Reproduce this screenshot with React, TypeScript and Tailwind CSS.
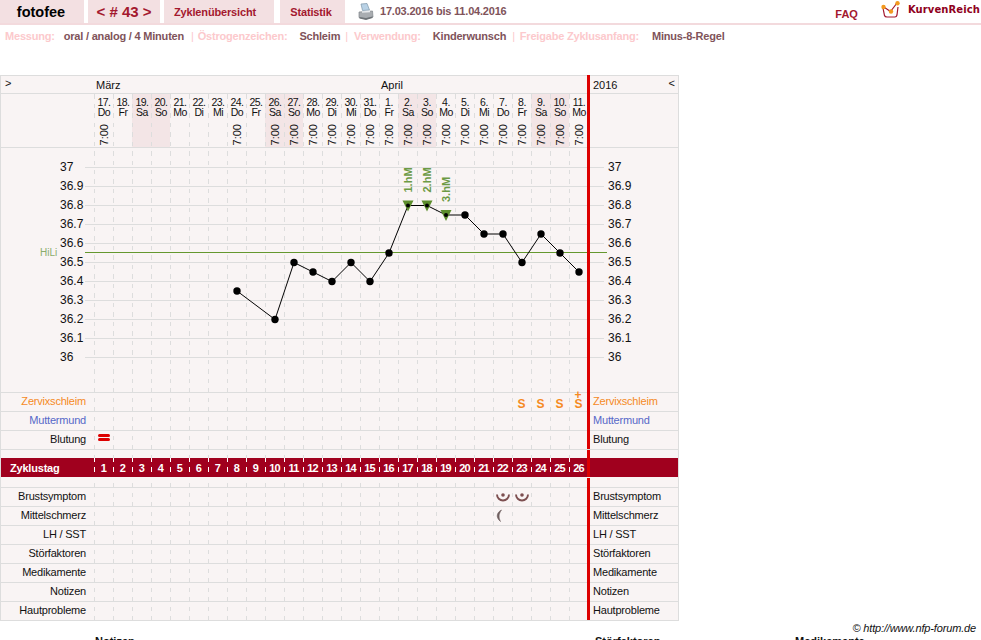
import type { ReactNode } from 'react'

const LINE = 'border-t border-[#dddddd]'
const DASH_GRAY = 'bg-[repeating-linear-gradient(to_bottom,#dddddd_0,#dddddd_4.5px,transparent_4.5px,transparent_9.5px)]'
const DASH_WHITE = 'bg-[repeating-linear-gradient(to_bottom,#ffffff_0,#ffffff_4.5px,transparent_4.5px,transparent_9.5px)]'

const days = [
  { d: '17.', w: 'Do', t: true },
  { d: '18.', w: 'Fr' },
  { d: '19.', w: 'Sa', we: true },
  { d: '20.', w: 'So', we: true },
  { d: '21.', w: 'Mo' },
  { d: '22.', w: 'Di' },
  { d: '23.', w: 'Mi' },
  { d: '24.', w: 'Do', t: true },
  { d: '25.', w: 'Fr' },
  { d: '26.', w: 'Sa', we: true, t: true },
  { d: '27.', w: 'So', we: true, t: true },
  { d: '28.', w: 'Mo', t: true },
  { d: '29.', w: 'Di', t: true },
  { d: '30.', w: 'Mi', t: true },
  { d: '31.', w: 'Do', t: true },
  { d: '1.', w: 'Fr', t: true },
  { d: '2.', w: 'Sa', we: true, t: true },
  { d: '3.', w: 'So', we: true, t: true },
  { d: '4.', w: 'Mo', t: true },
  { d: '5.', w: 'Di', t: true },
  { d: '6.', w: 'Mi', t: true },
  { d: '7.', w: 'Do', t: true },
  { d: '8.', w: 'Fr', t: true },
  { d: '9.', w: 'Sa', we: true, t: true },
  { d: '10.', w: 'So', we: true, t: true },
  { d: '11.', w: 'Mo', t: true },
]

const temps: [number, number][] = [
  [7, 36.35], [9, 36.2], [10, 36.5], [11, 36.45], [12, 36.4], [13, 36.5], [14, 36.4], [15, 36.55],
  [16, 36.8], [17, 36.8], [18, 36.75], [19, 36.75], [20, 36.65], [21, 36.65], [22, 36.5], [23, 36.65],
  [24, 36.55], [25, 36.45],
]

const axis = ['37', '36.9', '36.8', '36.7', '36.6', '36.5', '36.4', '36.3', '36.2', '36.1', '36']

const px = (i: number) => 94.5 + 19 * i + 9.5
const py = (t: number) => 167.5 + (37 - t) * 190

function Chart() {
  const pts = temps.map(([i, t]) => [px(i), py(t)])
  return (
    <svg width="677" height="244" viewBox="1 148 677 244" className="relative z-[5] block text-[12px]">
      {axis.map((label, i) => {
        const y = 167.5 + i * 19
        return (
          <g key={i}>
            <line x1="85" x2="604" y1={y} y2={y} stroke="#dddddd" />
            <text x="60" y={y + 3.5} fill="#111">{label}</text>
            <text x="608" y={y + 3.5} fill="#111">{label}</text>
          </g>
        )
      })}
      <line x1="85" x2="607" y1="252.5" y2="252.5" stroke="#65982f" />
      <text x="40" y="256" fontSize="10" fill="#8aad6a">HiLi</text>
      <polyline points={pts.map((p) => p.join(',')).join(' ')} fill="none" stroke="#000" />
      {[0, 1, 2].map((n) => {
        const [x, y] = pts[8 + n]
        return (
          <g key={n}>
            <polygon points={`${x - 5.5},${y - 5} ${x + 5.5},${y - 5} ${x},${y + 6}`} fill="#5c8d2c" />
            <text
              transform={`translate(${x + 4} ${y - 13}) rotate(-90)`}
              fontSize="11"
              fontWeight="700"
              fill="#6c9a44"
            >
              {n + 1}.hM
            </text>
          </g>
        )
      })}
      {pts.map(([x, y], i) =>
        i >= 8 && i <= 10 ? (
          <circle key={i} cx={x} cy={y} r="2" fill="#000" />
        ) : (
          <circle key={i} cx={x} cy={y} r="3.7" fill="#000" />
        ),
      )}
    </svg>
  )
}

function Breast() {
  return (
    <svg width="14" height="11" viewBox="0 0 14 11">
      <circle cx="7" cy="3" r="1.8" fill="#7d4f50" />
      <path d="M1 2.5 A6 6 0 0 0 13 2.5" fill="none" stroke="#7d4f50" strokeWidth="1.9" />
    </svg>
  )
}

function Midpain() {
  return (
    <svg width="8" height="14" viewBox="0 0 8 14" className="-ml-[7px]">
      <path d="M6.5 1 C1.5 3.5 0.5 8.5 5.5 12.5 C3.5 8.5 3.5 5 6.5 1 Z" fill="#6f5f60" stroke="#6f5f60" strokeWidth="0.6" />
    </svg>
  )
}

function Bleed() {
  return (
    <div className="mb-[6px] flex flex-col gap-px">
      <div className="h-[3px] w-[12px] rounded-full bg-[#dd0000]" />
      <div className="h-[3px] w-[12px] rounded-full bg-[#dd0000]" />
    </div>
  )
}

function Slime({ plus }: { plus?: boolean }) {
  return (
    <div className="relative pt-[4px] text-[12px] font-bold leading-[14px] text-[#f58a1f]">
      {plus && <span className="absolute -top-[4px] left-0 text-[12px] leading-[12px]">+</span>}
      S
    </div>
  )
}

function Row({
  label,
  color = 'text-[#111]',
  marks = {},
}: {
  label: string
  color?: string
  marks?: Record<number, ReactNode>
}) {
  return (
    <div className={`flex h-[19px] text-[11px] leading-[17px] tracking-[-0.2px] ${LINE}`}>
      <div className={`w-[93px] pr-[8px] text-right ${color}`}>{label}</div>
      <div className="grid w-[494px] grid-cols-[repeat(26,19px)]">
        {days.map((_, i) => (
          <div key={i} className="flex items-center justify-center">
            {marks[i]}
          </div>
        ))}
      </div>
      <div className={`pl-[5px] ${color}`}>{label}</div>
    </div>
  )
}

function Tab({ className, children }: { className: string; children: ReactNode }) {
  return <div className={`flex h-[23px] items-center justify-center bg-[#f3e0e2] ${className}`}>{children}</div>
}

export default function App() {
  return (
    <div className="h-[640px] overflow-hidden bg-white text-[11px] leading-[18px] text-[#111] [font-family:'Liberation_Sans',Arial,sans-serif]">
      {/* top bar */}
      <div className="flex h-[25px] items-start border-b-2 border-[#f3dadd]">
        <Tab className="w-[84px] pr-[2px] text-[14.5px] font-bold text-black">fotofee</Tab>
        <Tab className="ml-[4px] w-[72px] text-[15px] font-bold text-[#a3182e]">&lt; # 43 &gt;</Tab>
        <Tab className="ml-[4px] w-[110px] pr-[8px] text-[11px] font-bold tracking-[-0.15px] text-[#a3182e]">Zyklenübersicht</Tab>
        <Tab className="ml-[6px] w-[65px] pr-[3px] text-[11px] font-bold tracking-[-0.15px] text-[#a3182e]">Statistik</Tab>
        <svg width="16" height="18" viewBox="0 0 16 18" className="ml-[13px] mt-[3px]">
          <path d="M3 1 L9 0.5 L11.5 7 L4.5 7.5 Z" fill="#b9d2e6" stroke="#7d95a8" strokeWidth="0.7" />
          <path d="M1 9 L14.5 8 L15 14 L8 16 L1 14.5 Z" fill="#a9adb1" stroke="#7f8589" strokeWidth="0.7" />
          <path d="M1.5 14 L8 15 L14.5 13.5 L14.5 15 L8 17 L1.5 15.5 Z" fill="#6f7478" />
          <path d="M4 9 L12 8.4" stroke="#e8ebee" strokeWidth="1.5" />
        </svg>
        <div className="ml-[6px] h-[23px] text-[11px] font-bold leading-[23px] tracking-[-0.2px] text-[#80535a]">17.03.2016 bis 11.04.2016</div>
        <div className="ml-auto mt-[5px] text-[11px] font-bold text-[#a3182e]">FAQ</div>
        <svg width="20" height="18" viewBox="0 0 20 18" className="ml-[23px] mt-px">
          <path d="M2 7 L3.5 14.5 Q4 16 6 16 L14 16 Q15.5 16 16 14 L17 6" fill="none" stroke="#a3182e" strokeWidth="1.2" />
          <path d="M2 5.5 L9.5 10.5 L16 2" fill="none" stroke="#a3182e" strokeWidth="1.2" />
          <circle cx="2.5" cy="6" r="2.2" fill="#f39a1f" />
          <circle cx="10" cy="10.5" r="2.2" fill="#f39a1f" />
          <circle cx="16.5" cy="2.2" r="2.2" fill="#f39a1f" />
        </svg>
        <div className="ml-[7px] mr-px mt-px text-[10px] font-bold tracking-[0.1px] text-[#8f0020] [font-family:'DejaVu_Sans',sans-serif]">KurvenReich</div>
      </div>

      {/* settings line */}
      <div className="flex h-[50px] pl-[5px] pt-[2px] text-[11px] font-bold tracking-[-0.2px] text-[#80535a]">
        <span className="text-[#fcc9cc]">Messung:</span>
        <span className="ml-[9px]">oral / analog / 4 Minuten</span>
        <span className="ml-[7px] font-normal text-[#fcc9cc]">|</span>
        <span className="ml-[4px] text-[#fcc9cc]">Östrogenzeichen:</span>
        <span className="ml-[12px]">Schleim</span>
        <span className="ml-[5px] font-normal text-[#fcc9cc]">|</span>
        <span className="ml-[6px] text-[#fcc9cc]">Verwendung:</span>
        <span className="ml-[12px]">Kinderwunsch</span>
        <span className="ml-[6px] font-normal text-[#fcc9cc]">|</span>
        <span className="ml-[5px] text-[#fcc9cc]">Freigabe Zyklusanfang:</span>
        <span className="ml-[13px]">Minus-8-Regel</span>
      </div>

      {/* chart table */}
      <div className="relative w-[679px] border border-[#dddddd] bg-[#f9f4f4]">
        <div className="flex h-[17px]">
          <div className="w-[93px] pl-[4px] leading-[14px]">&gt;</div>
          <div className="w-[285px] pl-[2px]">März</div>
          <div className="w-[209px] pl-[2px]">April</div>
          <div className="flex flex-1 justify-between pl-[5px] pr-[3px]">
            <span>2016</span>
            <span className="leading-[14px]">&lt;</span>
          </div>
        </div>

        <div className={`flex h-[54px] ${LINE}`}>
          <div className="w-[93px]" />
          <div className="grid w-[494px] grid-cols-[repeat(26,19px)]">
            {days.map((day, i) => (
              <div
                key={i}
                className={`flex flex-col items-center pl-[1px] pt-[3px] text-[10.5px] leading-[10px] tracking-[-0.5px] ${day.we ? 'bg-[#f3e5e6]' : ''}`}
              >
                <span>{day.d}</span>
                <span>{day.w}</span>
                {day.t && (
                  <span className="mt-[7px] rotate-180 text-[11px] leading-[14px] tracking-normal [writing-mode:vertical-rl]">
                    7:00
                  </span>
                )}
              </div>
            ))}
          </div>
        </div>

        <div className={`h-[245px] ${LINE}`}>
          <Chart />
        </div>

        <Row
          label="Zervixschleim"
          color="text-[#f58a1f]"
          marks={{ 22: <Slime />, 23: <Slime />, 24: <Slime />, 25: <Slime plus /> }}
        />
        <Row label="Muttermund" color="text-[#5668c8]" />
        <Row label="Blutung" marks={{ 0: <Bleed /> }} />

        <div className={`relative z-30 h-[9px] ${LINE}`} />
        <div className="relative z-10 flex h-[19px] bg-[#a0001e] pt-px text-[11px] font-bold text-white">
          <div className="w-[93px] pl-[9px] tracking-[-0.2px]">Zyklustag</div>
          <div className="grid w-[494px] grid-cols-[repeat(26,19px)]">
            {days.map((_, i) => (
              <div key={i} className="relative text-center tracking-[-0.8px]">
                <span className={`absolute -top-px left-0 h-[19px] w-px ${DASH_WHITE}`} />
                {i + 1}
              </div>
            ))}
          </div>
        </div>
        <div className="relative z-30 h-[10px] border-t border-[#f9f4f4]" />

        <Row label="Brustsymptom" marks={{ 21: <Breast />, 22: <Breast /> }} />
        <Row label="Mittelschmerz" marks={{ 21: <Midpain /> }} />
        <Row label="LH / SST" />
        <Row label="Störfaktoren" />
        <Row label="Medikamente" />
        <Row label="Notizen" />
        <Row label="Hautprobleme" />

        {/* dashed day lines and the red line of today, both laid over the rows */}
        <div className="pointer-events-none absolute bottom-0 left-[93px] top-[18px] flex">
          {days.map((_, i) => (
            <div key={i} className="w-[19px]">
              <div className={`h-full w-px ${DASH_GRAY}`} />
            </div>
          ))}
        </div>
        <div className="absolute -top-px bottom-0 left-[586px] z-20 w-[3px] bg-[#dd0000]" />
      </div>

      <div className="pr-[5px] text-right text-[11px] italic leading-[14px] tracking-[-0.15px]">© http://www.nfp-forum.de</div>
      <div className="flex text-[11px] font-bold leading-[13px]">
        <div className="ml-[95px] w-[500px]">Notizen</div>
        <div className="w-[200px]">Störfaktoren</div>
        <div>Medikamente</div>
      </div>
    </div>
  )
}
